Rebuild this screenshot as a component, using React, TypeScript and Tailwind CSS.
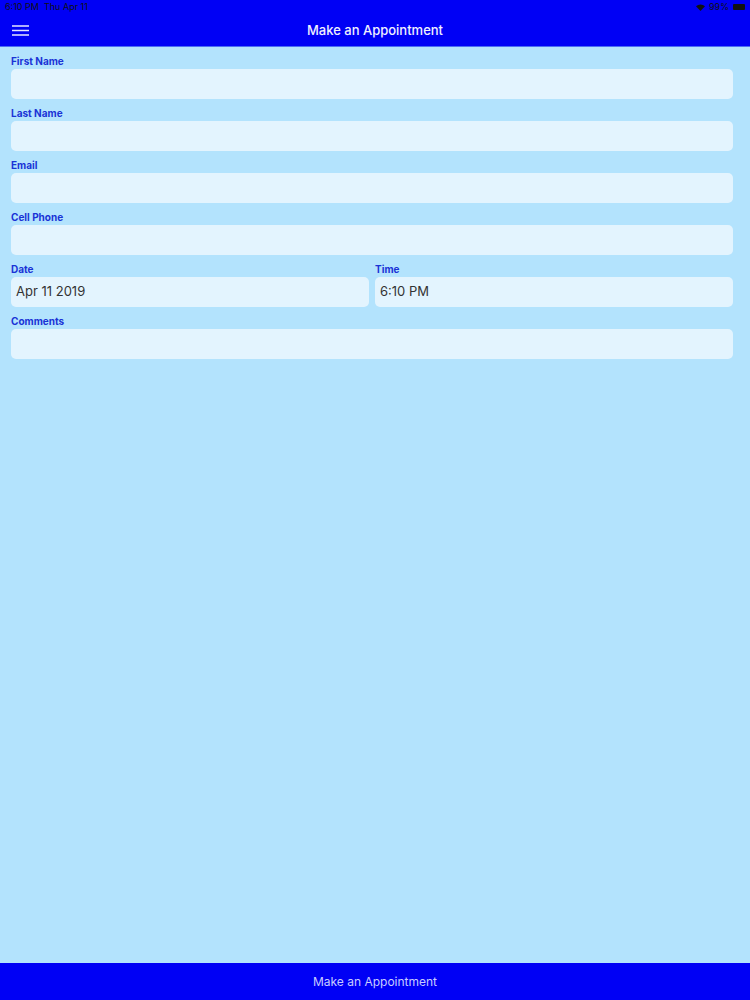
const font = { fontFamily: 'Inter, "Liberation Sans", sans-serif' }

function Field({ label, value, grow }: { label: string; value?: string; grow?: boolean }) {
  return (
    <div className={grow ? 'flex min-w-0 flex-1 flex-col' : 'flex flex-col'}>
      <label className="h-[22px] pt-[8px] text-[10px] font-bold leading-[12px] text-[#1a33d6]">{label}</label>
      <div className="flex h-[30px] items-center rounded-[5px] bg-[#e3f4fe] px-[5px] text-[13px] text-[#333]">{value}</div>
    </div>
  )
}

export default function App() {
  return (
    <div className="flex h-[1000px] w-[750px] flex-col bg-[#b3e3fd]" style={font}>
      <header className="flex h-[47px] flex-col border-b border-[#4d6cf5] bg-[#0000f5]">
        <div className="flex h-[14px] items-center justify-between px-[5px] text-[9px] text-[#111]">
          <span>6:10 PM&nbsp;&nbsp;Thu Apr 11</span>
          <span className="flex items-center gap-[4px]">
            <svg width="9" height="7" viewBox="0 0 9 7"><path d="M4.5 7 0 2.2A6.5 6.5 0 0 1 9 2.2Z" fill="#111" /></svg>
            <span>99%</span>
            <span className="h-[6px] w-[12px] rounded-[1px] bg-[#111]" />
          </span>
        </div>
        <div className="relative flex flex-1 items-center justify-center pt-[1px]">
          <svg className="absolute left-[12px] top-[11px]" width="17" height="11" viewBox="0 0 17 11">
            <path d="M0 1h17M0 5.5h17M0 10h17" stroke="#e6e6ff" strokeWidth="1.5" />
          </svg>
          <span className="text-[13px] font-medium text-[#f0f0ff]">Make an Appointment</span>
        </div>
      </header>
      <main className="flex flex-1 flex-col pl-[11px] pr-[17px]">
        <Field label="First Name" />
        <Field label="Last Name" />
        <Field label="Email" />
        <Field label="Cell Phone" />
        <div className="flex gap-[6px]">
          <Field label="Date" value="Apr 11 2019" grow />
          <Field label="Time" value="6:10 PM" grow />
        </div>
        <Field label="Comments" />
      </main>
      <footer className="flex h-[37px] items-center justify-center bg-[#0000f5] text-[12px] text-[#c8ccff]">
        Make an Appointment
      </footer>
    </div>
  )
}
